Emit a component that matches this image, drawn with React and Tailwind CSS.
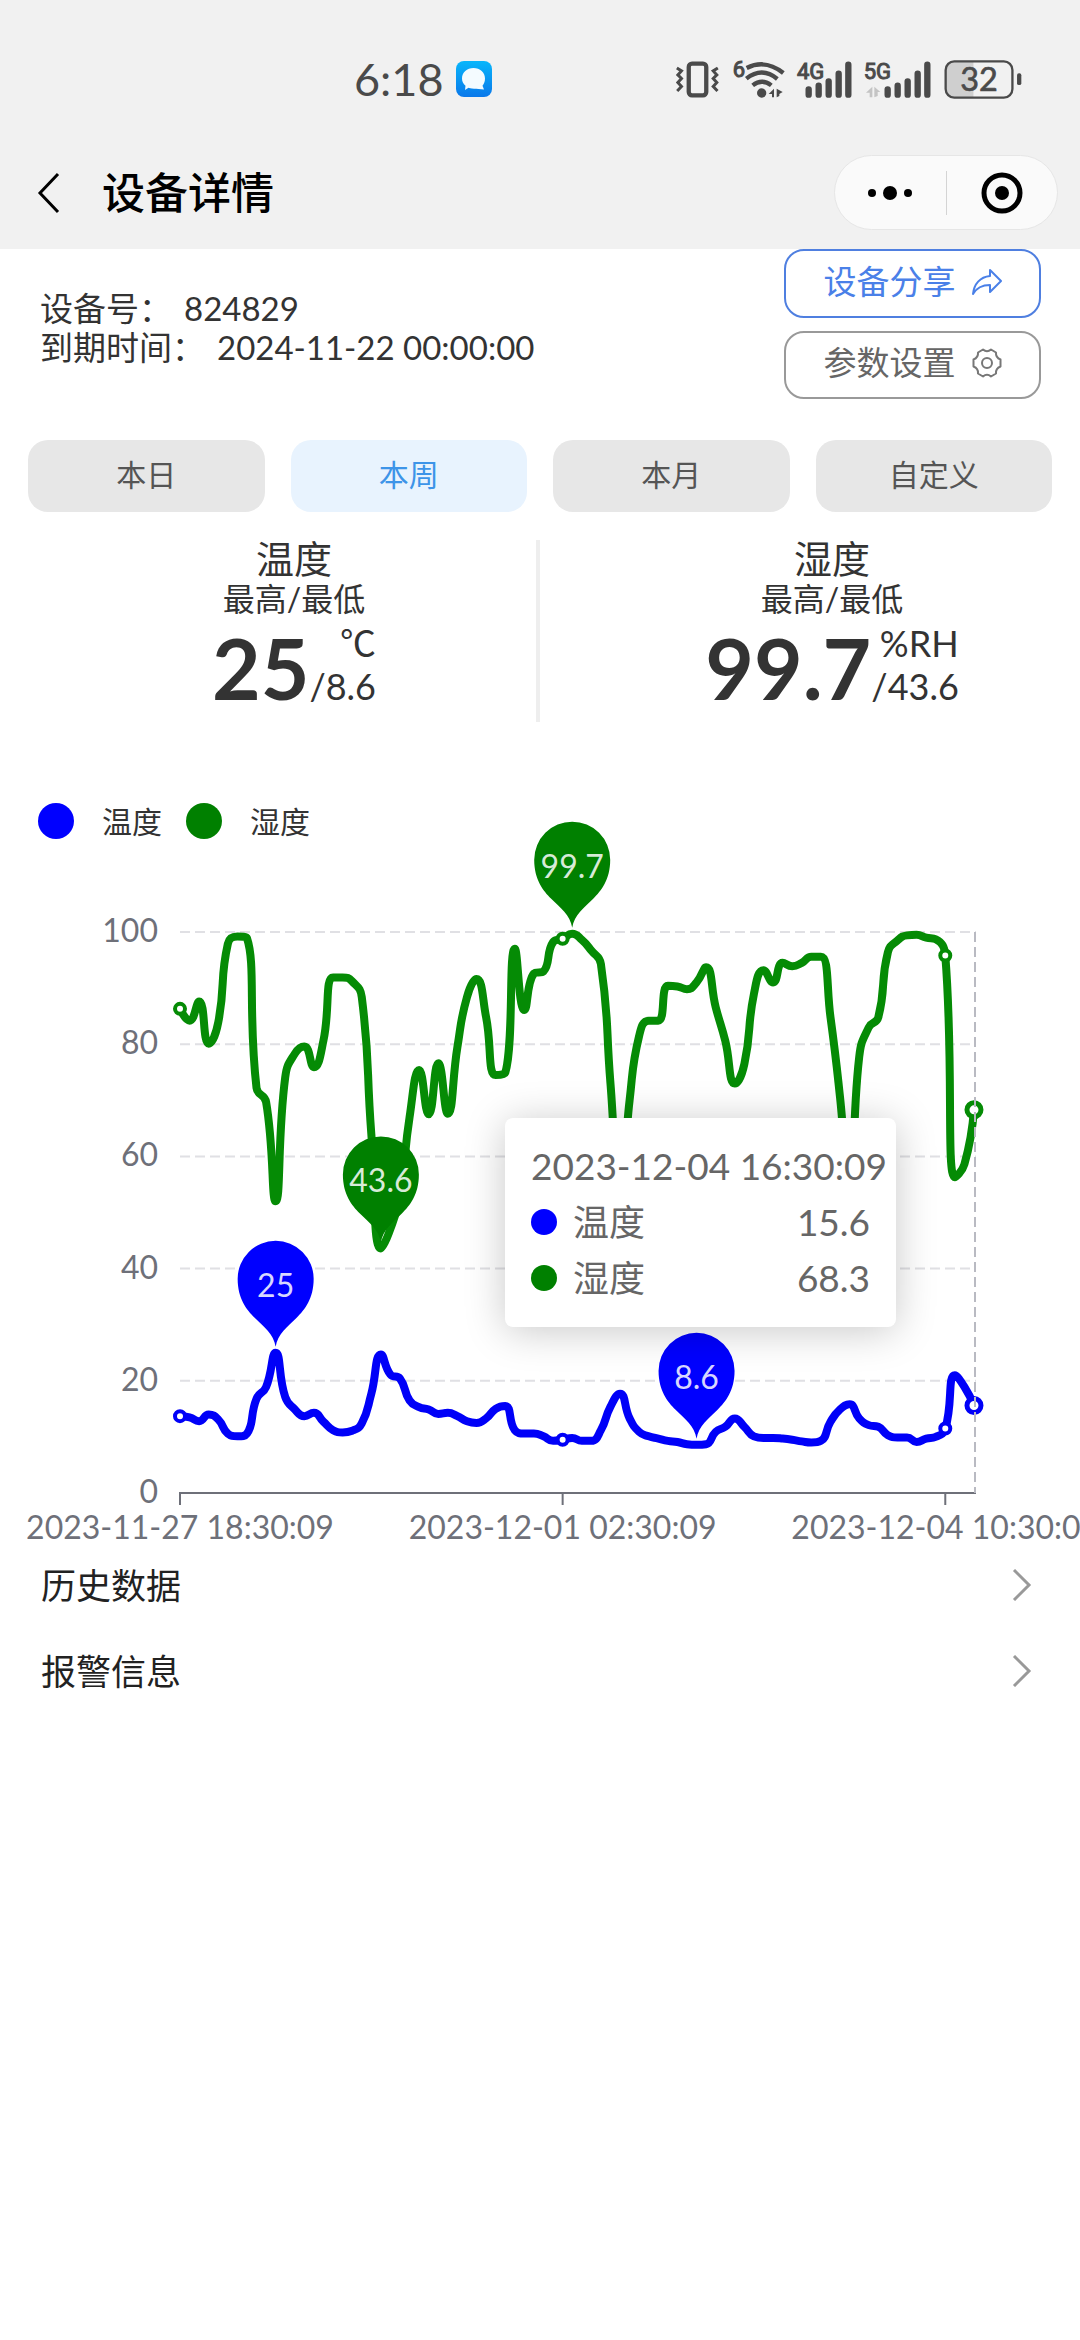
import React, { useState } from 'react';

const TEMP = [
  13.7, 13.5, 12.8, 14, 13.1, 10.6, 10.1, 10.6, 16.8, 18.9, 25, 17.1, 14.9, 13.7, 14.3, 12.7, 11.2, 10.8, 11.1, 12.4,
  17.7, 24.7, 21.1, 20.4, 16.5, 15.3, 14.9, 14.1, 14.3, 13.7, 12.8, 12.5, 13.3, 15, 15.5, 11.2, 10.6, 10.6, 10.1, 9.3,
  9.5, 9.8, 9.3, 9.3, 11.2, 15.4, 17.7, 13.3, 10.9, 10.1, 9.7, 9.3, 9.1, 8.7, 8.6, 8.7, 10.9, 11.8, 13.3, 11.8,
  10.1, 9.8, 9.8, 9.7, 9.5, 9.2, 9, 9.3, 12.7, 14.9, 15.8, 13.3, 12.1, 11.8, 10.3, 9.9, 9.9, 9.1, 9.7, 10,
  11.5, 21, 18.9, 15.6,
];

const HUMI = [
  86.3, 84.2, 87.6, 80.1, 83.9, 97.9, 99.2, 98.9, 72.2, 69.7, 52, 74.1, 78.3, 79.6, 75.9, 80.7, 91.9, 91.9, 91.2, 88.4,
  64, 43.6, 47.1, 53.3, 67, 75.4, 67.5, 76.6, 67.6, 79.5, 88.4, 91.6, 84.8, 74.5, 74.9, 97, 86.1, 92.6, 93, 98.2,
  98.8, 99.7, 98.6, 96.7, 94.3, 73, 52, 70, 81.5, 84.2, 84.2, 90.4, 90.3, 89.8, 91, 93.7, 86.6, 80.6, 73, 76.5,
  89, 93.2, 91, 94.5, 93.9, 94.5, 95.6, 95.6, 84.8, 70.5, 53, 77.7, 83, 84.8, 96.4, 98.5, 99.4, 99.5, 99, 98.7,
  95.8, 56.3, 58.6, 68.3,
];

const TICKS = [
  { index: 0, label: '2023-11-27 18:30:09' },
  { index: 40, label: '2023-12-01 02:30:09' },
  { index: 80, label: '2023-12-04 10:30:09' },
];

const PINS = [
  { index: 41, value: 99.7, color: 'green' },
  { index: 21, value: 43.6, color: 'green' },
  { index: 10, value: 25, color: 'blue' },
  { index: 54, value: 8.6, color: 'blue' },
];

const px = (i) => 180 + i * 9.566;
const py = (v) => 648 - v * 5.61;
const clamp = (v, a, b) => Math.max(Math.min(v, Math.max(a, b)), Math.min(a, b));

// smooth curve whose control points never leave the box of their segment
const smoothPath = (values) => {
  const pts = values.map((v, i) => [px(i), py(v)]);
  const last = pts.length - 1;
  const dist = (a, b) => Math.hypot(a[0] - b[0], a[1] - b[1]);
  let d = `M${pts[0][0]} ${pts[0][1]}`;
  let out = pts[0];
  for (let i = 1; i <= last; i++) {
    const prev = pts[i - 1];
    const p = pts[i];
    let cpIn = p;
    let cpOut = p;
    if (i < last) {
      const next = pts[i + 1];
      const lp = dist(prev, p);
      const ln = dist(p, next);
      cpIn = [0, 1].map((k) => {
        const o = clamp(p[k] + ((next[k] - prev[k]) * 0.5 * ln) / (lp + ln), p[k], next[k]);
        return clamp(p[k] - ((o - p[k]) * lp) / ln, prev[k], p[k]);
      });
      cpOut = [0, 1].map((k) => clamp(p[k] + ((p[k] - cpIn[k]) * ln) / lp, p[k], next[k]));
    }
    d += `C${out[0]} ${out[1]} ${cpIn[0]} ${cpIn[1]} ${p[0]} ${p[1]}`;
    out = cpOut;
  }
  return d;
};

const Bars = ({ x }) => (
  <g stroke="#4a4a4a" strokeWidth="19" strokeLinecap="round">
    <path d={`M${x} 146V162M${x + 30} 135V162M${x + 60} 122V162M${x + 90} 99V162M${x + 119} 72V162`} />
  </g>
);

const StatusBar = () => (
  <div className="flex h-[136px] items-center pt-[22px] pl-[354px] pr-[58px] text-[#4a4a4a]">
    <span className="text-[45px] leading-[46px]">6:18</span>
    <svg className="ml-3 h-9 w-9" viewBox="0 0 36 36">
      <defs>
        <linearGradient id="chat" x1="0" y1="0" x2="0" y2="1">
          <stop offset="0" stopColor="#08b6fb" />
          <stop offset="1" stopColor="#0a78ea" />
        </linearGradient>
      </defs>
      <rect width="36" height="36" rx="8" fill="url(#chat)" />
      <path d="M17.5 7C24 7 29 11.500 29 17.500C29 20.500 28 23 26.500 24.800L28 28.500C24 28.500 21 27.800 18 27.800C15 27.800 13 27 12.500 26.800L9 29L9.500 24.800C7.300 23 6 20.500 6 17.500C6 11.500 11 7 17.500 7Z" fill="#f4fbff" />
    </svg>
    <div className="ml-auto flex items-center gap-[13px]">
      <svg className="h-[37px] w-[46px]" viewBox="45 61 138 112" fill="none" stroke="#4a4a4a">
        <rect x="86" y="69" width="53" height="96" rx="10" strokeWidth="13" />
        <path d="M50 82L64 91L53 103L64 114L53 126L64 138L51 152M174 82L160 91L171 103L160 114L171 126L160 138L173 152" strokeWidth="9" />
      </svg>
      <svg className="h-[38px] w-[51px] overflow-visible" viewBox="216 58 153 114" fill="none" stroke="#4a4a4a">
        <text x="212" y="110" fontSize="66" fill="#4a4a4a" strokeWidth="3" className="font-[Roboto]">6</text>
        <path d="M254 82Q310 54 364 97M253 114Q300 77 346 115" strokeWidth="13" />
        <path d="M272 134Q300 112 328 134" strokeWidth="13" />
        <circle cx="299" cy="157" r="14" fill="#4a4a4a" stroke="none" />
        <path d="M336 144V170H330V160H320ZM344 170V144L362 154L352 160V166Z" fill="#4a4a4a" stroke="none" />
      </svg>
      <svg className="h-[38px] w-[54px] overflow-visible" viewBox="406 58 162 114">
        <text x="403" y="114" fontSize="66" fill="#4a4a4a" stroke="#4a4a4a" strokeWidth="3" className="font-[Roboto]">4G</text>
        <Bars x={438} />
      </svg>
      <svg className="h-[38px] w-[66px] overflow-visible" viewBox="610 58 198 114">
        <text x="606" y="114" fontSize="66" fill="#4a4a4a" stroke="#4a4a4a" strokeWidth="3" className="font-[Roboto]">5G</text>
        <path d="M632 138V170H624V156H613ZM638 170V138L656 154H648V166Z" fill="#c4c4c4" />
        <Bars x={678} />
      </svg>
      <svg className="h-[39px] w-[78px]" viewBox="849 58 234 118">
        <path d="M937 63V171H880Q854 171 854 145V89Q854 63 880 63Z" fill="#cfcfcf" />
        <rect x="853" y="62" width="202" height="110" rx="26" fill="none" stroke="#4a4a4a" strokeWidth="7" />
        <rect x="1069" y="98" width="13" height="36" rx="6" fill="#4a4a4a" />
        <text x="954" y="153" fontSize="98" fill="#4a4a4a" stroke="#4a4a4a" strokeWidth="2" textAnchor="middle">32</text>
      </svg>
    </div>
  </div>
);

const NavBar = () => (
  <div className="flex h-[113px] items-center pl-9 pr-[22px]">
    <button type="button" aria-label="返回">
      <svg className="h-11 w-7" viewBox="0 0 28 44" fill="none" stroke="#000" strokeWidth="3">
        <path d="M22 3L4 22L22 41" />
      </svg>
    </button>
    <h1 className="ml-[38px] text-[43px] leading-[60px] font-medium text-black">设备详情</h1>
    <div className="ml-auto flex h-[75px] w-[224px] items-center rounded-full border border-[#e6e6e6] bg-[#fafafa]">
      <button type="button" aria-label="更多" className="flex flex-1 justify-center">
        <svg className="h-4 w-11" viewBox="0 0 44 16">
          <circle cx="4" cy="8" r="4" />
          <circle cx="22" cy="8" r="7" />
          <circle cx="40" cy="8" r="4" />
        </svg>
      </button>
      <span className="h-11 w-px bg-[#d4d4d4]" />
      <button type="button" aria-label="关闭" className="flex flex-1 justify-center">
        <svg className="h-[42px] w-[42px]" viewBox="0 0 42 42">
          <circle cx="21" cy="21" r="18" fill="none" stroke="#000" strokeWidth="5" />
          <circle cx="21" cy="21" r="7" />
        </svg>
      </button>
    </div>
  </div>
);

const DeviceInfo = () => (
  <section className="flex items-start justify-between pl-10 pr-[39px]">
    <div className="pt-10 text-[33px] leading-[39px] text-[#333]">
      <p className="flex items-center">设备号：<span className="ml-3">824829</span></p>
      <p className="flex items-center">到期时间：<span className="ml-3">2024-11-22 00:00:00</span></p>
    </div>
    <div className="flex w-[257px] flex-col gap-[13px] text-[33px]">
      <button type="button" className="flex h-[69px] items-center justify-center gap-4 rounded-[20px] border-2 border-[#4f7fe0] pb-1 text-[#4a80e8]">
        设备分享
        <svg className="h-[30px] w-[30px]" viewBox="0 0 30 30" fill="none" stroke="#4a80e8" strokeWidth="2" strokeLinejoin="round">
          <path d="M18 3L29 14L18 25V18C11 18 5 20 1 27C2 17 8 10 18 9Z" />
        </svg>
      </button>
      <button type="button" className="flex h-[68px] items-center justify-center gap-4 rounded-[20px] border-2 border-[#999] pb-1 text-[#666]">
        参数设置
        <svg className="h-[30px] w-[30px]" viewBox="0 0 30 30" fill="none" stroke="#777" strokeWidth="2" strokeLinejoin="round">
          <path d="M11 1.500Q15 5 19 1.500L24 4.500Q23.500 9.500 28.500 11.500V18.500Q23.500 20.500 24 25.500L19 28.500Q15 25 11 28.500L6 25.500Q6.500 20.500 1.500 18.500V11.500Q6.500 9.500 6 4.500Z" />
          <circle cx="15" cy="15" r="5" />
        </svg>
      </button>
    </div>
  </section>
);

const Stat = ({ name, high, unit, low }) => (
  <div className="flex flex-col items-center text-[#333]">
    <h2 className="text-[38px] leading-9">{name}</h2>
    <p className="text-[32px] leading-[46px]">最高/最低</p>
    <div className="flex">
      <strong className="text-[84px] leading-[92px] font-bold">{high}</strong>
      <div className="text-right text-[36px] leading-[43px]">
        <p>{unit}</p>
        <p>/{low}</p>
      </div>
    </div>
  </div>
);

const Chart = () => (
  <svg className="block w-full overflow-visible" viewBox="0 0 1080 697" role="img" aria-label="温度湿度曲线">
    <g stroke="#e0e0e4" strokeWidth="2" strokeDasharray="10 5">
      {[20, 40, 60, 80, 100].map((v) => (
        <path key={v} d={`M180 ${py(v)}H976`} />
      ))}
    </g>
    <g fontSize="32" fill="#6e7079" textAnchor="end">
      {[0, 20, 40, 60, 80, 100].map((v) => (
        <text key={v} x="158" y={py(v) + 10}>{v}</text>
      ))}
    </g>
    <path d="M179 648H976" stroke="#6e7079" strokeWidth="2" />
    {TICKS.map((t) => (
      <g key={t.index}>
        <path d={`M${px(t.index)} 648v12`} stroke="#6e7079" strokeWidth="2" />
        <text x={px(t.index)} y="694" fontSize="32" fill="#6e7079" textAnchor="middle">{t.label}</text>
      </g>
    ))}
    <g fill="none" strokeWidth="8" strokeLinejoin="round">
      <path d={smoothPath(TEMP)} stroke="#0000f8" />
      <path d={smoothPath(HUMI)} stroke="#058b05" />
    </g>
    {TICKS.map((t) => (
      <g key={t.index} fill="#fff" strokeWidth="4">
        <circle cx={px(t.index)} cy={py(TEMP[t.index])} r="5" stroke="#0000f8" />
        <circle cx={px(t.index)} cy={py(HUMI[t.index])} r="5" stroke="#058b05" />
      </g>
    ))}
    <g fill="#fff" strokeWidth="5">
      <circle cx={px(83)} cy={py(TEMP[83])} r="7" stroke="#0000f8" />
      <circle cx={px(83)} cy={py(HUMI[83])} r="7" stroke="#058b05" />
    </g>
    <path d="M975 87V648" stroke="#b9bac2" strokeWidth="2" strokeDasharray="10 5" />
    {PINS.map((p) => (
      <g key={p.index} transform={`translate(${px(p.index)} ${py(p.value) - 6})`}>
        <path d="M0 0C-2 -13 -12 -20 -21 -29C-29 -37 -38 -48 -38 -68A38 38 0 0 1 38 -68C38 -48 29 -37 21 -29C12 -20 2 -13 0 0Z" fill={p.color} />
        <text y="-50" fontSize="32" fill="#fff" fillOpacity="0.85" textAnchor="middle">{p.value}</text>
      </g>
    ))}
  </svg>
);

const Tooltip = () => (
  <div className="absolute top-[321px] right-[184px] h-[209px] w-[391px] rounded-lg bg-white px-[26px] pt-5 text-[37px] leading-[56px] text-[#666] shadow-[0_4px_40px_rgba(0,0,0,0.22)]">
    <p className="whitespace-nowrap">2023-12-04 16:30:09</p>
    <div className="flex items-center">
      <span className="h-[26px] w-[26px] rounded-full bg-[#00f]" />
      <span className="ml-4 text-[36px]">温度</span>
      <span className="ml-auto">15.6</span>
    </div>
    <div className="flex items-center">
      <span className="h-[26px] w-[26px] rounded-full bg-[#008000]" />
      <span className="ml-4 text-[36px]">湿度</span>
      <span className="ml-auto">68.3</span>
    </div>
  </div>
);

const LinkRow = ({ label }) => (
  <a href="#" className="flex h-[86px] items-center justify-between pl-[41px] pr-[48px] text-[35px] text-[#222]">
    {label}
    <svg className="h-8 w-5" viewBox="0 0 20 32" fill="none" stroke="#999" strokeWidth="3">
      <path d="M2 1L17 16L2 31" />
    </svg>
  </a>
);

const App = () => {
  const [period, setPeriod] = useState('本周');

  return (
    <div className="min-h-screen overflow-x-hidden bg-white font-[Lato,'Noto_Sans_CJK_SC',sans-serif]">
      <header className="bg-[#f1f1f1]">
        <StatusBar />
        <NavBar />
      </header>
      <main>
        <DeviceInfo />
        <div className="mt-[41px] grid grid-cols-4 gap-[26px] px-7">
          {['本日', '本周', '本月', '自定义'].map((name) => (
            <button
              key={name}
              type="button"
              onClick={() => setPeriod(name)}
              className={`h-[72px] rounded-[20px] pb-1 text-[30px] ${
                period === name ? 'bg-[#e8f3fe] text-[#3d94e8]' : 'bg-[#e7e7e7] text-[#555]'
              }`}
            >
              {name}
            </button>
          ))}
        </div>
        <section className="mt-7 grid h-[182px] grid-cols-2">
          <div className="border-r-4 border-[#eee] pl-13">
            <Stat name="温度" high="25" unit="℃" low="8.6" />
          </div>
          <div className="pl-11">
            <Stat name="湿度" high="99.7" unit="%RH" low="43.6" />
          </div>
        </section>
        <section className="relative mt-[75px]">
          <div className="flex h-12 items-center pl-[38px] text-[30px] text-[#333]">
            <span className="h-9 w-9 rounded-full bg-[#00f]" />
            <span className="ml-7">温度</span>
            <span className="ml-6 h-9 w-9 rounded-full bg-[#008000]" />
            <span className="ml-7">湿度</span>
          </div>
          <Chart />
          <Tooltip />
        </section>
        <nav>
          <LinkRow label="历史数据" />
          <LinkRow label="报警信息" />
        </nav>
      </main>
    </div>
  );
};

export default App;
